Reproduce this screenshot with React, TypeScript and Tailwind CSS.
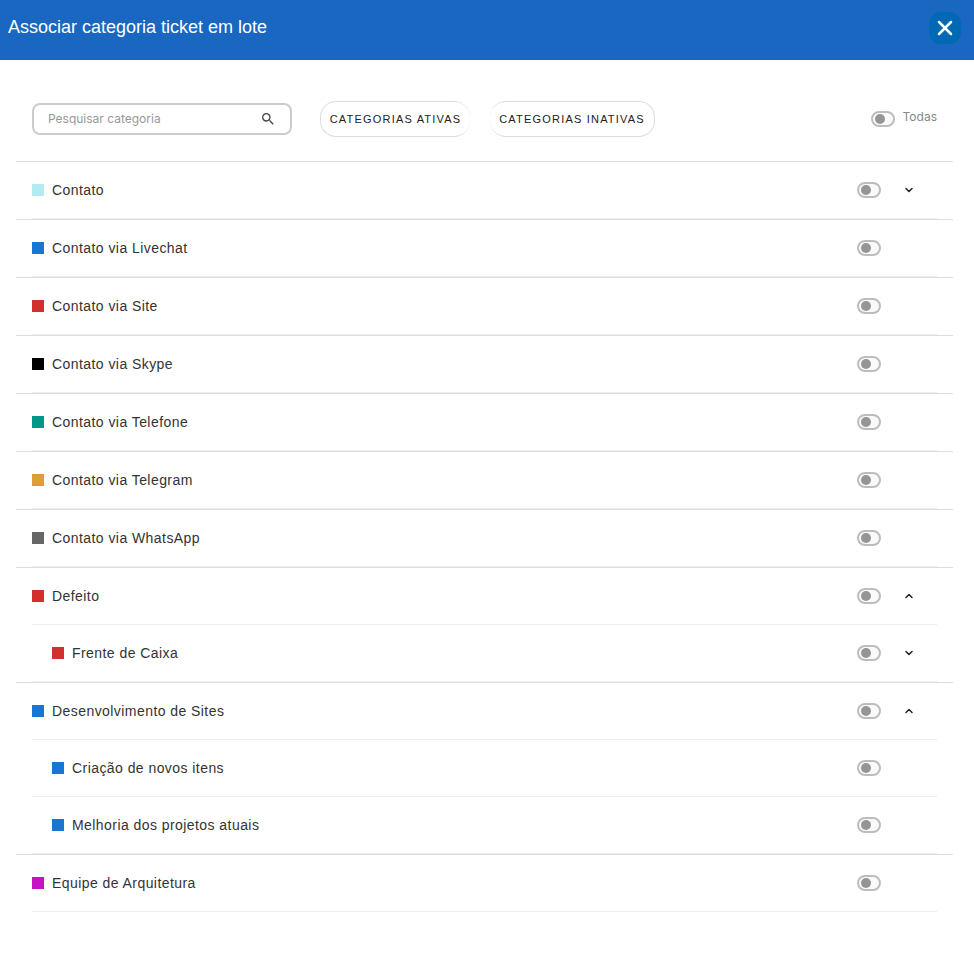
import { useState } from "react";
import { ChevronDown, ChevronUp, X } from "lucide-react";
import { MdSearch } from "react-icons/md";

interface Category {
  name: string;
  color: string;
  expandable?: boolean;
  children?: Category[];
}

const categories: Category[] = [
  { name: "Contato", color: "bg-[#b2ebf2]", expandable: true },
  { name: "Contato via Livechat", color: "bg-[#1976d2]" },
  { name: "Contato via Site", color: "bg-[#d32f2f]" },
  { name: "Contato via Skype", color: "bg-black" },
  { name: "Contato via Telefone", color: "bg-[#009688]" },
  { name: "Contato via Telegram", color: "bg-[#dd9f35]" },
  { name: "Contato via WhatsApp", color: "bg-[#666666]" },
  {
    name: "Defeito",
    color: "bg-[#d32f2f]",
    expandable: true,
    children: [{ name: "Frente de Caixa", color: "bg-[#d32f2f]", expandable: true }],
  },
  {
    name: "Desenvolvimento de Sites",
    color: "bg-[#1976d2]",
    expandable: true,
    children: [
      { name: "Criação de novos itens", color: "bg-[#1976d2]" },
      { name: "Melhoria dos projetos atuais", color: "bg-[#1976d2]" },
    ],
  },
  { name: "Equipe de Arquitetura", color: "bg-[#c711c7]" },
];

interface ToggleProps {
  id: string;
  checked: boolean;
  onChange: () => void;
}

function Toggle({ id, checked, onChange }: ToggleProps) {
  return (
    <span className="relative inline-flex h-4 w-6 shrink-0">
      <input
        id={id}
        type="checkbox"
        checked={checked}
        onChange={onChange}
        className="peer h-4 w-6 cursor-pointer appearance-none rounded-full border-2 border-[#bdbdbd] bg-[#fafafa] checked:border-[#1976d2]"
      />
      <span className="pointer-events-none absolute top-[3px] left-1 size-[10px] rounded-full bg-[#959595] peer-checked:left-[10px] peer-checked:bg-[#1976d2]" />
    </span>
  );
}

interface CategoryRowProps {
  category: Category;
  nested?: boolean;
  open: boolean;
  checked: boolean;
  onCheck: () => void;
  onExpand: () => void;
}

function CategoryRow({ category, nested, open, checked, onCheck, onExpand }: CategoryRowProps) {
  return (
    <div className={`flex h-[57px] items-center border-b border-[#eeeeee] ${nested ? "pl-5" : ""}`}>
      <span className={`mr-2 size-3 shrink-0 ${category.color}`} />
      <label htmlFor={category.name} className="flex-1 text-sm tracking-[0.03125em] text-[#333333]">
        {category.name}
      </label>
      <Toggle id={category.name} checked={checked} onChange={onCheck} />
      <div className="flex w-14 justify-center">
        {category.expandable && (
          <button
            type="button"
            aria-label={category.name}
            aria-expanded={open}
            onClick={onExpand}
            className="flex size-6 cursor-pointer items-center justify-center text-[#222222]"
          >
            {open ? <ChevronUp size={12} strokeWidth={3} /> : <ChevronDown size={12} strokeWidth={3} />}
          </button>
        )}
      </div>
    </div>
  );
}

export default function App() {
  const [search, setSearch] = useState("");
  const [selected, setSelected] = useState<string[]>([]);
  const [expanded, setExpanded] = useState<string[]>(["Defeito", "Desenvolvimento de Sites"]);

  const allNames = categories.flatMap((c) => [c.name, ...(c.children ?? []).map((child) => child.name)]);
  const allSelected = selected.length === allNames.length;

  const flip = (list: string[], name: string) =>
    list.includes(name) ? list.filter((n) => n !== name) : [...list, name];

  const visible = categories.filter((c) =>
    [c, ...(c.children ?? [])].some((item) => item.name.toLowerCase().includes(search.toLowerCase()))
  );

  const renderRow = (category: Category, nested = false) => (
    <CategoryRow
      key={category.name}
      category={category}
      nested={nested}
      open={expanded.includes(category.name)}
      checked={selected.includes(category.name)}
      onCheck={() => setSelected(flip(selected, category.name))}
      onExpand={() => setExpanded(flip(expanded, category.name))}
    />
  );

  return (
    <div className="min-h-screen bg-white font-['Liberation_Sans',Arial,sans-serif]">
      <header className="flex h-[60px] items-start justify-between bg-[#1967c0] pt-3 pr-[13px] pl-2">
        <h1 className="text-lg leading-[30px] text-white">Associar categoria ticket em lote</h1>
        <button
          type="button"
          aria-label="Fechar"
          className="flex size-8 cursor-pointer items-center justify-center rounded-xl bg-[#0069b4] text-white"
        >
          <X size={24} strokeWidth={2.5} />
        </button>
      </header>

      <main className="pt-[41px] pr-[21px] pb-11 pl-4">
        {/* Filters */}
        <div className="flex items-center px-4 pb-6">
          <div className="flex h-8 w-[260px] items-center rounded-lg border-2 border-[#cccccc] px-[14px]">
            <input
              type="text"
              aria-label="Pesquisar categoria"
              placeholder="Pesquisar categoria"
              value={search}
              onChange={(e) => setSearch(e.target.value)}
              className="min-w-0 flex-1 font-[Inter,sans-serif] text-xs text-[#333333] outline-none placeholder:text-[#999999]"
            />
            <MdSearch size={16} className="text-[#444444]" />
          </div>
          <div className="ml-7 flex gap-5">
            <button
              type="button"
              className="h-9 w-[150px] cursor-pointer rounded-2xl border border-r-0 border-[#dddddd] text-[11px] tracking-[1.2px] whitespace-nowrap text-[#222222]"
            >
              CATEGORIAS ATIVAS
            </button>
            <button
              type="button"
              className="h-9 w-[165px] cursor-pointer rounded-2xl border border-l-0 border-[#dddddd] text-[11px] tracking-[1.2px] whitespace-nowrap text-[#222222]"
            >
              CATEGORIAS INATIVAS
            </button>
          </div>
          <div className="ml-auto flex items-center gap-2">
            <Toggle id="todas" checked={allSelected} onChange={() => setSelected(allSelected ? [] : allNames)} />
            <label htmlFor="todas" className="pb-1 font-[Inter,sans-serif] text-xs leading-4 text-[#888888]">
              Todas
            </label>
          </div>
        </div>

        {/* Category tree */}
        <ul>
          {visible.map((category) => (
            <li key={category.name} className="border-t border-[#dddddd] px-4">
              {renderRow(category)}
              {expanded.includes(category.name) && category.children?.map((child) => renderRow(child, true))}
            </li>
          ))}
        </ul>
      </main>
    </div>
  );
}
